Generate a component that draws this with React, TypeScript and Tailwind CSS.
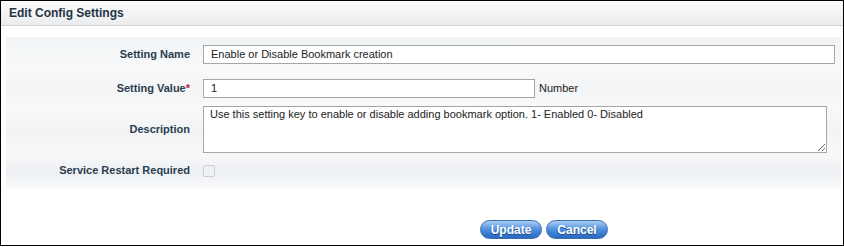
import React from "react";

const font = { fontFamily: '"Liberation Sans", Arial, sans-serif' };

function Label({ children }: { children: React.ReactNode }) {
  return (
    <div className="w-[184px] shrink-0 text-right text-[11px] font-bold text-[#2b3d4f] leading-[13px]">
      {children}
    </div>
  );
}

export default function App() {
  return (
    <div className="w-[844px] h-[247px] bg-white" style={font}>
      <div className="h-[246px] w-[844px] border border-black flex flex-col">
        <div className="h-[25px] shrink-0 border-b border-[#cfd2d4] bg-gradient-to-b from-[#fbfbfb] to-[#ebeced] flex items-center pl-[8px]">
          <span className="text-[12px] font-bold text-[#1f3546] leading-none">Edit Config Settings</span>
        </div>

        <div className="mt-[11px] ml-[5px] mr-[2px] flex flex-col">
          <div className="flex items-center gap-[13px] pt-[8px] pb-[8px] bg-gradient-to-b from-[#f1f4f6] to-[#f8f9fa]">
            <Label>Setting Name</Label>
            <div className="w-[632px] h-[19px] border border-[#a6a6a6] bg-white flex items-center px-[7px] text-[11px] text-[#222]">
              Enable or Disable Bookmark creation
            </div>
          </div>
          <div className="flex items-center gap-[13px] pt-[7px] pb-[7px] bg-gradient-to-b from-[#f8f9fa] via-[#f2f4f6] to-[#f8f9fa]">
            <Label>
              Setting Value<span className="text-[#c0262d]">*</span>
            </Label>
            <div className="w-[332px] h-[19px] border border-[#a6a6a6] bg-white flex items-center px-[7px] text-[11px] text-[#222]">
              1
            </div>
            <span className="-ml-[9px] text-[11px] text-[#222]">Number</span>
          </div>
          <div className="flex items-center gap-[13px] pt-[1px] pb-[4px] bg-gradient-to-b from-[#f8f9fa] via-[#f1f3f5] to-[#f7f8f9]">
            <Label>Description</Label>
            <textarea
              readOnly
              defaultValue="Use this setting key to enable or disable adding bookmark option. 1- Enabled 0- Disabled"
              className="w-[624px] h-[47px] border border-[#a6a6a6] bg-white px-[6px] pt-[1px] text-[11px] leading-[13px] text-[#222] outline-none"
              style={font}
            />
          </div>
          <div className="flex items-center gap-[13px] pt-[7px] pb-[12px] bg-gradient-to-b from-[#f6f7f8] via-[#edf0f3] to-[#fbfcfc]">
            <Label>Service Restart Required</Label>
            <div className="w-[12px] h-[12px] border border-[#cbcdcf] bg-[#eef0f1] rounded-[2px]" />
          </div>
        </div>

        <div className="mt-[31px] flex justify-center pl-[244px] gap-[4px]">
          {["Update", "Cancel"].map((t) => (
            <div
              key={t}
              className="w-[62px] h-[19px] rounded-full border border-[#3b6db0] bg-gradient-to-b from-[#a9cdf3] via-[#4d8fdd] to-[#2a68c0] flex items-center justify-center text-[12px] font-bold text-white [text-shadow:0_1px_1px_#1b4784]"
            >
              {t}
            </div>
          ))}
        </div>
      </div>
    </div>
  );
}
